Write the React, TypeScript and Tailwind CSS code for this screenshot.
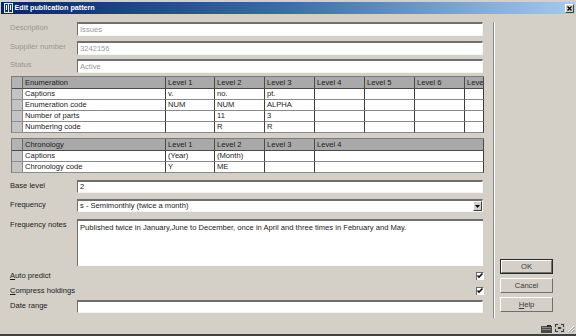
import React from "react";

const inputCls =
  "bg-white border-t-2 border-l border-t-[#6f6f6f] border-l-[#6f6f6f] border-b border-r border-b-[#f4f4f4] border-r-[#f4f4f4] pl-[2px] flex items-center overflow-hidden whitespace-nowrap";

function Field({
  label,
  value,
  disabled,
  h = 14,
  mt,
}: {
  label: string;
  value: string;
  disabled?: boolean;
  h?: number;
  mt: string;
}) {
  return (
    <div className={`flex items-start ${mt}`}>
      <div
        className={`w-[67px] pt-[1px] leading-[9px] ${disabled ? "text-[#9a968e]" : "text-[#1a1a1a]"}`}
      >
        {label}
      </div>
      <div
        className={`${inputCls} w-[406px] ${disabled ? "text-[#9a9a9a]" : "text-[#1a1a1a]"}`}
        style={{ height: h }}
      >
        {value}
      </div>
    </div>
  );
}

const enumWidths = [11, 143, 49, 50, 50, 50, 50, 50, 19];
const chronoWidths = [11, 143, 49, 50, 50, 169];

function Table({
  widths,
  header,
  rows,
}: {
  widths: number[];
  header: string[];
  rows: string[][];
}) {
  return (
    <div className="ml-[1px] w-[473px] border-t border-l border-t-[#7a7a7a] border-l-[#7a7a7a] overflow-hidden">
      <div className="flex h-[12px] bg-[#a9a9a9]">
        {widths.map((w, i) => (
          <div
            key={i}
            className={`shrink-0 h-full border-r border-b border-[#4a4a4a] pl-[2px] leading-[11px] overflow-hidden whitespace-nowrap ${i === 0 ? "bg-[#b3b3b3] border-r-[#6a6a6a]" : ""}`}
            style={{ width: w }}
          >
            {i === 0 ? "" : header[i - 1] ?? ""}
          </div>
        ))}
      </div>
      {rows.map((r, ri) => (
        <div key={ri} className="flex h-[11px] bg-white">
          {widths.map((w, i) => (
            <div
              key={i}
              className={`shrink-0 h-full border-b pl-[2px] leading-[10px] overflow-hidden whitespace-nowrap ${
                i === 0
                  ? "bg-[#c4c4c4] border-r border-r-[#8a8a8a] border-b-[#8f8f8f]"
                  : "border-r border-r-[#3e3e3e] border-b-[#8a8a8a]"
              }`}
              style={{ width: w }}
            >
              {i === 0 ? "" : r[i - 1] ?? ""}
            </div>
          ))}
        </div>
      ))}
    </div>
  );
}

function Check() {
  return (
    <svg width="8" height="8" viewBox="0 0 8 8" className="block">
      <rect x="0" y="0" width="8" height="8" fill="#ffffff" />
      <path d="M0 0.5H7.5M0.5 0V8" stroke="#6a6a6a" strokeWidth="1" />
      <path d="M1.5 3.5L3 5L6.5 1.5" stroke="#111" strokeWidth="1.6" fill="none" />
    </svg>
  );
}

function Btn({ children, def }: { children: React.ReactNode; def?: boolean }) {
  return (
    <div
      className={`w-[53px] h-[15px] ${def ? "border border-[#2a2a2a]" : ""}`}
    >
      <div className="w-full h-full border-t border-l border-t-white border-l-white border-b border-r border-b-[#6f6f6f] border-r-[#6f6f6f] flex items-center justify-center text-[#3a3a3a] bg-[#d4d0c8]">
        {children}
      </div>
    </div>
  );
}

export default function App() {
  return (
    <div className="w-[576px] h-[336px] bg-[#d4d0c8] overflow-hidden font-['Liberation_Sans',Arial,sans-serif] text-[7.6px] text-[#1a1a1a] flex flex-col border-b-2 border-b-[#404040]">
      {/* Title bar */}
      <div className="mt-[2px] mx-[1px] h-[12px] bg-gradient-to-r from-[#0a246a] via-[#3a6ea5] to-[#a6caf0] flex items-center">
        <svg width="9" height="10" viewBox="0 0 9 10" className="ml-[3px] block">
          <rect x="0" y="0" width="9" height="10" fill="#e8eef8" />
          <rect x="1" y="1" width="3" height="8" fill="#1a2f7a" />
          <rect x="5" y="1" width="3" height="8" fill="#1a2f7a" />
          <rect x="2" y="2" width="1" height="5" fill="#ffffff" />
          <rect x="6" y="2" width="1" height="5" fill="#ffffff" />
        </svg>
        <span className="ml-[1.5px] text-white font-bold text-[7.2px] leading-none">
          Edit publication pattern
        </span>
        <div className="ml-auto mr-[1px] w-[9px] h-[9px] bg-[#d4d0c8] border-t border-l border-t-white border-l-white border-b border-r border-b-[#404040] border-r-[#404040] flex items-center justify-center">
          <svg width="5" height="5" viewBox="0 0 5 5" className="block">
            <path d="M0.5 0.5L4.5 4.5M4.5 0.5L0.5 4.5" stroke="#000" strokeWidth="1.3" />
          </svg>
        </div>
      </div>

      {/* Body */}
      <div className="flex flex-1">
        <div className="w-[493px] pl-[10px] flex flex-col">
          <Field label="Description" value="Issues" disabled mt="mt-[8px]" />
          <Field label="Supplier number" value="3242156" disabled mt="mt-[5px]" />
          <Field label="Status" value="Active" disabled mt="mt-[4px]" />
          <div className="mt-[3px]">
            <Table
              widths={enumWidths}
              header={["Enumeration", "Level 1", "Level 2", "Level 3", "Level 4", "Level 5", "Level 6", "Level 7"]}
              rows={[
                ["Captions", "v.", "no.", "pt."],
                ["Enumeration code", "NUM", "NUM", "ALPHA"],
                ["Number of parts", "", "11", "3"],
                ["Numbering code", "", "R", "R"],
              ]}
            />
          </div>
          <div className="mt-[5px]">
            <Table
              widths={chronoWidths}
              header={["Chronology", "Level 1", "Level 2", "Level 3", "Level 4"]}
              rows={[
                ["Captions", "(Year)", "(Month)"],
                ["Chronology code", "Y", "ME"],
              ]}
            />
          </div>
          <Field label="Base level" value="2" h={13} mt="mt-[7px]" />
          <div className="flex items-start mt-[6px]">
            <div className="w-[67px] pt-[1px] leading-[9px]">Frequency</div>
            <div className={`${inputCls} w-[406px] h-[13px] relative`}>
              s - Semimonthly (twice a month)
              <div className="absolute right-0 top-0 w-[9px] h-[10px] bg-[#d4d0c8] border-t border-l border-t-white border-l-white border-b border-r border-b-[#404040] border-r-[#404040] flex items-center justify-center">
                <svg width="5" height="3" viewBox="0 0 5 3" className="block">
                  <path d="M0 0H5L2.5 3Z" fill="#000" />
                </svg>
              </div>
            </div>
          </div>
          <div className="flex items-start mt-[7px]">
            <div className="w-[67px] pt-[1px] leading-[9px]">Frequency notes</div>
            <div className="bg-white border-t-2 border-l border-t-[#6f6f6f] border-l-[#6f6f6f] w-[406px] h-[47px] pl-[2px] pt-[2px] leading-[9px] whitespace-nowrap overflow-hidden">
              Published twice in January,June to December, once in April and three times in February and May.
            </div>
          </div>
          <div className="flex items-center mt-[4px] h-[12px] w-[473px]">
            <span>
              <span className="underline">A</span>uto predict
            </span>
            <div className="ml-auto mr-[-1px]">
              <Check />
            </div>
          </div>
          <div className="flex items-center mt-[3px] h-[12px] w-[473px]">
            <span>
              <span className="underline">C</span>ompress holdings
            </span>
            <div className="ml-auto mr-[-1px]">
              <Check />
            </div>
          </div>
          <Field label="Date range" value="" h={13} mt="mt-[3px]" />
        </div>

        {/* separator */}
        <div className="mt-[8px] h-[296px] w-[2px] border-l border-l-[#8a8a8a] border-r border-r-white" />

        {/* right panel */}
        <div className="flex-1 flex flex-col pl-[5px]">
          <div className="mt-[245px] flex flex-col gap-[4px]">
            <Btn def>OK</Btn>
            <Btn>Cancel</Btn>
            <Btn>
              <span>
                <span className="underline">H</span>elp
              </span>
            </Btn>
          </div>
          <div className="mt-auto mb-[1px] flex items-end justify-end gap-[2px] pr-[1px]">
            <svg width="11" height="8" viewBox="0 0 11 8" className="block">
              <rect x="0" y="1" width="11" height="7" fill="#4a4a4a" />
              <rect x="1" y="2" width="9" height="1" fill="#8a8a8a" />
              <rect x="1" y="4" width="9" height="1" fill="#8a8a8a" />
              <rect x="6" y="0" width="4" height="2" fill="#2a2a2a" />
            </svg>
            <svg width="11" height="10" viewBox="0 0 11 10" className="block">
              <rect x="0" y="0" width="11" height="10" fill="#c8c4bc" />
              <path d="M1 1h3v1H2v2H1zM10 1H7v1h2v2h1zM1 9h3V8H2V6H1zM10 9H7V8h2V6h1z" fill="#3a3a3a" />
              <rect x="4" y="4" width="3" height="2" fill="#3a3a3a" />
            </svg>
            <svg width="8" height="8" viewBox="0 0 8 8" className="block">
              <path d="M7 1L1 7M7 4L4 7" stroke="#ffffff" strokeWidth="1" />
              <path d="M7.5 2L2 7.5M7.5 5L5 7.5" stroke="#8a8a8a" strokeWidth="1" />
            </svg>
          </div>
        </div>
      </div>
    </div>
  );
}
